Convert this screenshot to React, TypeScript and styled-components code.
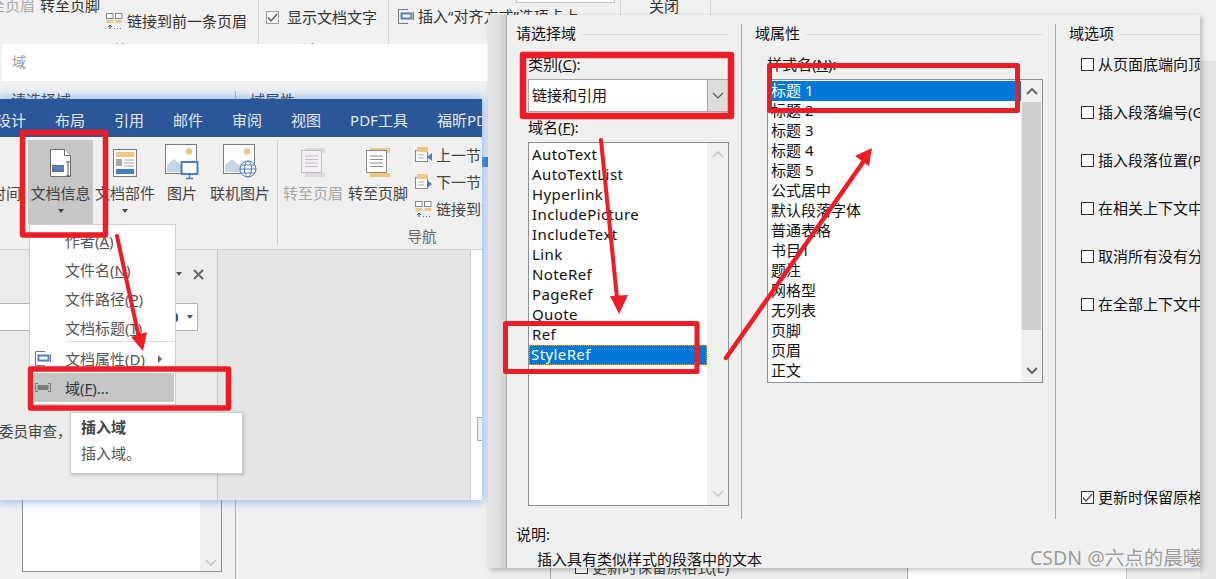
import React from "react";
import styled, { createGlobalStyle } from "styled-components";

const GlobalStyle = createGlobalStyle`
  html, body {
    margin: 0;
    padding: 0;
    background: #efefef;
  }
  * {
    box-sizing: border-box;
  }
`;

const Canvas = styled.div`
  position: relative;
  width: 1216px;
  height: 579px;
  overflow: hidden;
  background: #f0f0f0;
  color: #333;
  font-family: "Noto Sans", "Noto Sans CJK SC", sans-serif;
  font-size: 15px;
  line-height: 18px;
  white-space: nowrap;
`;

/* ---------- what lies behind everything ---------- */

const TopRibbon = styled.div`
  position: absolute;
  left: 0;
  top: 0;
  display: flex;
  width: 100%;
  height: 60px;
  overflow: hidden;
  background: #f1f1f1;
`;

const TopGroup = styled.div<{ $w: number }>`
  flex: none;
  display: flex;
  flex-direction: column;
  width: ${(p) => p.$w}px;
  height: 100%;
  border-right: 1px solid #d6d6d6;
`;

const TopRow = styled.div<{ $left: number; $top: number; $h?: number; $gap?: number }>`
  display: flex;
  align-items: center;
  gap: ${(p) => p.$gap ?? 5}px;
  margin: ${(p) => p.$top}px 0 0 ${(p) => p.$left}px;
  height: ${(p) => p.$h ?? 16}px;
`;

const Faded = styled.span`
  color: #a8a8a8;
`;

const TopLabel = styled.div<{ $left: number }>`
  margin: auto 0 0 ${(p) => p.$left}px;
  height: 19px;
  color: #666;
`;

const TopInput = styled.div`
  margin-left: 127px;
  width: 99px;
  height: 3px;
  background: #fff;
  border: 1px solid #c4c4c4;
  border-top: 0;
`;

const BackDialog = styled.div`
  position: absolute;
  left: 2px;
  top: 44px;
  display: flex;
  flex-direction: column;
  width: 490px;
  height: 535px;
  background: #f0f0f0;
`;

const BackTitle = styled.div`
  flex: none;
  height: 37px;
  padding: 9px 10px;
  background: #fff;
  color: #999;
  font-size: 14px;
`;

const BackBody = styled.div`
  display: flex;
  padding-top: 10px;
`;

const BackColumn = styled.div`
  width: 234px;
  height: 488px;
  padding-left: 9px;
  border-right: 1px solid #b4b4b4;
`;

const BackSecondColumn = styled.div`
  padding-left: 14px;
`;

const BackList = styled.div`
  display: flex;
  justify-content: flex-end;
  align-items: flex-end;
  margin: 32px 0 0 11px;
  width: 200px;
  height: 431px;
  background: #fff;
  border: 1px solid #8a8f99;
`;

const BackScroll = styled.div`
  display: flex;
  justify-content: center;
  align-items: flex-end;
  width: 21px;
  height: 100%;
  padding-bottom: 4px;
  background: #f0f0f0;
`;

const BackAccent = styled.div`
  position: absolute;
  left: 482px;
  top: 157px;
  width: 6px;
  height: 10px;
  background: #2f7fd0;
`;

const BackEdge = styled.div`
  position: absolute;
  right: 0;
  top: 61px;
  bottom: 0;
  width: 16px;
  background: #e5e5e5;
  border-top: 1px solid #dcdcdc;
`;

const BehindWindow = styled.div`
  position: absolute;
  left: 488px;
  top: 550px;
  display: flex;
  width: 712px;
  height: 29px;
  background: #eee;
`;

const BehindCell = styled.div`
  width: 63px;
  border-right: 1px solid #aaa;
`;

const BehindOption = styled.div`
  display: flex;
  align-items: center;
  gap: 4px;
  width: 356px;
  padding: 5px 0 0 24px;
  height: 29px;
  color: #444;
`;

const BehindWhite = styled.div`
  width: 220px;
  background: #fff;
  border-left: 1px solid #aaa;
  border-right: 1px solid #c8c8c8;
`;

/* ---------- word window ---------- */

const WordWindow = styled.div`
  position: absolute;
  left: 0;
  top: 99px;
  display: flex;
  flex-direction: column;
  width: 482px;
  height: 401px;
  overflow: hidden;
  background: #f0f0f0;
  box-shadow: 0 0 9px 2px rgba(100, 160, 235, 0.65);
`;

const TabBar = styled.div`
  flex: none;
  display: flex;
  gap: 29px;
  height: 38px;
  padding-top: 12px;
  overflow: hidden;
  background: #2b579a;
  color: #e3e9f3;
`;

const Tab = styled.span<{ $first?: boolean }>`
  flex: none;
  margin-left: ${(p) => (p.$first ? -4 : 0)}px;
`;

const Ribbon = styled.div`
  flex: none;
  display: flex;
  height: 113px;
  padding-top: 3px;
  overflow: hidden;
  background: #f0f0f0;
  border-bottom: 1px solid #d2d2d2;
`;

const LargeButton = styled.div<{ $w: number; $active?: boolean; $muted?: boolean }>`
  flex: none;
  display: flex;
  flex-direction: column;
  align-items: center;
  width: ${(p) => p.$w}px;
  height: 84px;
  background: ${(p) => (p.$active ? "#c6c6c6" : "transparent")};
  color: ${(p) => (p.$muted ? "#a6a6a6" : "#444")};
`;

const ClippedButton = styled(LargeButton)`
  align-items: flex-end;
  padding-right: 7px;
`;

const IconSlot = styled.div`
  display: flex;
  align-items: center;
  justify-content: center;
  height: 44px;
`;

const Caret = styled.i`
  margin-top: 7px;
  border: 3px solid transparent;
  border-top: 4px solid #444;
  border-bottom: 0;
`;

const RibbonDivider = styled.div`
  flex: none;
  width: 1px;
  height: 104px;
  margin: 1px 2px 0 4px;
  background: #cfcfcf;
`;

const NavGroup = styled.div`
  flex: none;
  display: flex;
  flex-direction: column;
  width: 284px;
`;

const NavRow = styled.div`
  display: flex;
`;

const NavSmall = styled.div`
  display: flex;
  flex-direction: column;
  margin: 1px 0 0 5px;
`;

const SmallButton = styled.div`
  display: flex;
  align-items: center;
  gap: 4px;
  height: 27px;
  color: #444;
`;

const GroupLabel = styled.div`
  margin-top: 3px;
  text-align: center;
  color: #666;
  font-size: 14.5px;
`;

const Pane = styled.div`
  flex: 1;
  display: flex;
  min-height: 0;
`;

const TaskPane = styled.div`
  flex: none;
  width: 218px;
  padding-right: 13px;
  background: #ebebeb;
  border-right: 1px solid #c8c8c8;
`;

const TaskHeader = styled.div`
  display: flex;
  justify-content: flex-end;
  align-items: center;
  gap: 11px;
  height: 48px;
`;

const PaneInput = styled.div`
  display: flex;
  justify-content: flex-end;
  align-items: center;
  gap: 9px;
  width: 198px;
  height: 28px;
  margin-top: 5px;
  padding-right: 4px;
  background: #fff;
  border: 1px solid #b4b4b4;
  border-left: 0;
`;

const PaneGlyph = styled.i`
  width: 3px;
  height: 9px;
  border-radius: 0 3px 3px 0;
  background: #2b579a;
`;

const PaneCaret = styled.i`
  border: 3px solid transparent;
  border-top: 4px solid #555;
  border-bottom: 0;
`;

const PaneText = styled.div`
  margin-top: 91px;
  margin-left: -1px;
  font-size: 14.5px;
  color: #444;
`;

const DocArea = styled.div`
  flex: 1;
  background: #e5e5e5;
`;

const DocEdge = styled.div`
  flex: none;
  width: 12px;
  padding: 167px 0 0 6px;
  background: #fff;
  border-left: 1px solid #cfcfcf;
`;

const DocMark = styled.div`
  height: 24px;
  background: #f0f0f0;
  border: 1px solid #aaa;
  border-right: 0;
`;

const Menu = styled.div`
  position: absolute;
  left: 29px;
  top: 224px;
  width: 147px;
  height: 181px;
  padding-top: 1px;
  background: #fff;
  border: 1px solid #cfcfcf;
  color: #555;
`;

const MenuItem = styled.div<{ $active?: boolean }>`
  display: grid;
  grid-template-columns: 35px 1fr auto;
  align-items: center;
  height: 29px;
  padding-right: 13px;
  background: ${(p) => (p.$active ? "#c6c6c6" : "transparent")};
  color: ${(p) => (p.$active ? "#333" : "#555")};
  box-shadow: ${(p) => (p.$active ? "inset 4px 0 0 #fff, inset -1px 0 0 #fff" : "none")};
`;

const MenuIcon = styled.span`
  display: flex;
  padding-left: 5px;
`;

const MenuSeparator = styled.div`
  height: 1px;
  margin: -1px 0 2px 37px;
  background: #ddd;
`;

const SubArrow = styled.i`
  border: 4px solid transparent;
  border-left: 4px solid #666;
  border-right: 0;
`;

const Shortcut = styled.u`
  text-underline-offset: 1px;
`;

const Tooltip = styled.div`
  position: absolute;
  left: 70px;
  top: 412px;
  width: 173px;
  height: 62px;
  padding: 1px 10px;
  background: #fff;
  border: 1px solid #ccc;
  box-shadow: 1px 1px 3px rgba(0, 0, 0, 0.2);
  line-height: 26px;
  color: #555;
`;

const TooltipTitle = styled.div`
  font-weight: 700;
  color: #444;
`;

/* ---------- the field dialog ---------- */

const FieldDialog = styled.div`
  position: absolute;
  left: 488px;
  top: 15px;
  display: flex;
  width: 712px;
  height: 553px;
  overflow: hidden;
  background: #f0f0f0;
  box-shadow: 2px 2px 5px rgba(0, 0, 0, 0.25);
  color: #111;
`;

const DialogEdge = styled.div`
  flex: none;
  width: 19px;
  background: linear-gradient(90deg, #e6e6e6 0%, #dedede 60%, #cfcfcf 100%);
  border-right: 1px solid #a8a8a8;
`;

const DialogBody = styled.div`
  flex: 1;
  min-width: 0;
  padding-top: 9px;
`;

const Columns = styled.div`
  display: grid;
  grid-template-columns: 235px 314px 1fr;
  height: 495px;
`;

const Column = styled.div<{ $pl: number; $pr: number; $divider?: boolean }>`
  display: flex;
  flex-direction: column;
  min-width: 0;
  padding: 0 ${(p) => p.$pr}px 0 ${(p) => p.$pl}px;
  border-right: ${(p) => (p.$divider ? "1px solid #a6a6a6" : "0")};
`;

const Legend = styled.div`
  display: flex;
  align-items: center;
  gap: 6px;
  height: 20px;
  padding-bottom: 2px;
  margin-bottom: 11px;

  &::after {
    content: "";
    flex: 1;
    height: 1px;
    margin-top: 2px;
    background: #dcdcdc;
  }
`;

const FieldLabel = styled.div<{ $top?: number }>`
  height: 20px;
  margin: ${(p) => p.$top ?? 0}px 0 4px 12px;
`;

const Select = styled.div`
  display: flex;
  justify-content: space-between;
  margin-left: 12px;
  height: 33px;
  background: #fff;
  border: 1px solid #a6a6a6;
`;

const SelectValue = styled.span`
  padding: 6px 3px;
`;

const SelectButton = styled.span`
  display: flex;
  align-items: center;
  justify-content: center;
  width: 21px;
  background: #dcdcdc;
  border-left: 1px solid #a6a6a6;
`;

const ListBox = styled.div<{ $h: number }>`
  display: flex;
  height: ${(p) => p.$h}px;
  margin-left: 12px;
  background: #fff;
  border: 1px solid #8a8f99;
`;

const ListItems = styled.div<{ $top: number; $inset: number; $spacing?: number }>`
  flex: 1;
  min-width: 0;
  padding: ${(p) => p.$top}px 0 0 ${(p) => p.$inset}px;
  letter-spacing: ${(p) => p.$spacing ?? 0}px;
`;

const ListItem = styled.div<{ $selected?: boolean; $focus?: boolean }>`
  height: 20px;
  padding-left: ${(p) => (p.$focus ? 2 : 3)}px;
  background: ${(p) => (p.$selected ? "#0078d7" : "transparent")};
  color: ${(p) => (p.$selected ? "#fff" : "#111")};
  outline: ${(p) => (p.$focus ? "1px dotted #e8a33c" : "0")};
  outline-offset: -1px;
`;

const ScrollTrack = styled.div`
  flex: none;
  display: flex;
  flex-direction: column;
  align-items: center;
  width: 21px;
  background: #f0f0f0;
`;

const ScrollButton = styled.div`
  flex: none;
  display: flex;
  align-items: center;
  justify-content: center;
  height: 22px;
`;

const ScrollThumb = styled.div`
  align-self: stretch;
  height: 228px;
  margin: 0 1px;
  background: #cdcdcd;
`;

const ScrollSpace = styled.div`
  flex: 1;
`;

const OptionRow = styled.div<{ $bottom?: boolean }>`
  display: flex;
  align-items: center;
  gap: 4px;
  height: 20px;
  padding-bottom: 2px;
  margin: ${(p) => (p.$bottom ? "auto 0 11px 12px" : "0 0 28px 12px")};
`;

const Box = styled.span<{ $muted?: boolean }>`
  flex: none;
  display: flex;
  align-items: center;
  justify-content: center;
  width: 13px;
  height: 13px;
  background: ${(p) => (p.$muted ? "#f4f4f4" : "#fff")};
  border: 1px solid ${(p) => (p.$muted ? "#a0a0a0" : "#333")};
`;

const DescriptionTitle = styled.div`
  height: 20px;
  margin: 6px 0 5px 9px;
`;

const Description = styled.div`
  margin-left: 30px;
`;

const Annotations = styled.svg`
  position: absolute;
  left: 0;
  top: 0;
  pointer-events: none;
`;

const Watermark = styled.div`
  position: absolute;
  left: 1030px;
  top: 546px;
  width: 170px;
  overflow: hidden;
  font-size: 19.5px;
  line-height: 24px;
  color: #9b9b9b;
  text-shadow: 0 0 1px #fff;
`;

/* ---------- drawings ---------- */

const Chevron = ({ up, color, weight = 1.2 }: { up?: boolean; color: string; weight?: number }) => (
  <svg width="12" height="8" viewBox="0 0 12 8">
    <path
      d={up ? "M1 7 6 2l5 5" : "M1 1l5 5 5-5"}
      fill="none"
      stroke={color}
      strokeWidth={weight}
    />
  </svg>
);

const DocInfoIcon = () => (
  <svg width="24" height="32" viewBox="0 0 24 32">
    <path d="M1.500 3.500h14l6 6v21h-20z" fill="#fff" stroke="#6f6f6f" />
    <path d="M15.500 3.500v6h6" fill="#fff" stroke="#6f6f6f" />
    <rect x="3.500" y="19.500" width="11" height="6" fill="#4e81bd" stroke="#6f6f6f" />
    <path d="M17 16h4M17 30h4M19 16v14" fill="none" stroke="#555" />
  </svg>
);

const DocPartsIcon = () => (
  <svg width="24" height="32" viewBox="0 0 24 32">
    <rect x="0.500" y="3.500" width="23" height="27" fill="#fff" stroke="#7b7b7b" />
    <rect x="3" y="6" width="18" height="5" fill="#f0c77e" />
    <rect x="3" y="13" width="6" height="7" fill="#a9a9a9" />
    <path d="M11 14h10M11 17h10M11 20h10" stroke="#a9a9a9" />
    <rect x="3" y="23" width="18" height="5" fill="#4a7ebb" />
  </svg>
);

const PictureFrame = () => (
  <>
    <rect x="0.500" y="0.500" width="31" height="29" fill="#fff" stroke="#7b7b7b" />
    <circle cx="24" cy="7.500" r="3.200" fill="#f0c77e" />
    <path d="M2 28V21l7-6 7 6 4-3v10z" fill="#c3d5ea" />
  </>
);

const PictureIcon = () => (
  <svg width="34" height="36" viewBox="0 0 34 36">
    <PictureFrame />
    <rect x="16.500" y="18" width="16" height="12" fill="#fff" stroke="#4a7ebb" strokeWidth="2" />
    <path d="M24.500 31v3M21 34.500h7" stroke="#4a7ebb" strokeWidth="1.500" />
  </svg>
);

const OnlinePictureIcon = () => (
  <svg width="34" height="36" viewBox="0 0 34 36">
    <PictureFrame />
    <circle cx="25" cy="25" r="8" fill="#fff" stroke="#4a7ebb" />
    <ellipse cx="25" cy="25" rx="3.500" ry="8" fill="none" stroke="#4a7ebb" />
    <path d="M17 25h16M18.500 21h13M18.500 29h13" stroke="#4a7ebb" />
  </svg>
);

const HeaderIcon = ({ muted }: { muted?: boolean }) => {
  const line = muted ? "#c2bcc4" : "#8a8a8a";
  const accent = muted ? "#dcdadc" : "#f0c77e";
  return (
    <svg width="26" height="32" viewBox="0 0 26 32">
      <rect x="5" y="2" width="20" height="5" fill={accent} />
      <rect x="1.500" y="4.500" width="20" height="22" fill={muted ? "#f5f0f6" : "#fff"} stroke={line} />
      <path d="M5 10h13M5 13.500h13M5 17h13M5 20.500h13" stroke={line} />
      <rect x="5" y="27" width="20" height="4" fill={accent} />
    </svg>
  );
};

const SectionIcon = ({ next }: { next?: boolean }) => (
  <svg width="17" height="18" viewBox="0 0 17 18">
    <rect x="0.500" y="4.500" width="12" height="11" fill="#fff" stroke="#8a8a8a" />
    <rect x="2" y="1" width="11" height="5" fill="#f0c77e" />
    <path d="M3 9h6M3 12h6" stroke="#a9a9a9" />
    <path d={next ? "M12 7l5 4-5 4z" : "M17 7l-5 4 5 4z"} fill="#4a7ebb" />
  </svg>
);

const LinkIcon = () => (
  <svg width="17" height="18" viewBox="0 0 17 18">
    <rect x="0.500" y="1.500" width="6.500" height="5" fill="#fff" stroke="#8a8a8a" />
    <rect x="9.500" y="1.500" width="6.500" height="5" fill="#fff" stroke="#8a8a8a" />
    <rect x="0.500" y="8" width="6.500" height="3" fill="#f0c77e" />
    <rect x="9.500" y="8" width="6.500" height="3" fill="#f0c77e" />
    <path d="M4 17v-4M2 15l2-2 2 2" fill="none" stroke="#2b579a" />
    <path d="M8 16.500h9" stroke="#4a7ebb" strokeDasharray="1 2" />
  </svg>
);

const PagePropertyIcon = () => (
  <svg width="16" height="15" viewBox="0 0 16 15">
    <path d="M10 .5H.5v14H10" fill="none" stroke="#777" />
    <rect x="3.500" y="4.500" width="10" height="5" fill="#fff" stroke="#4e81bd" strokeWidth="2" />
    <path d="M15.500 3v8" stroke="#777" />
  </svg>
);

const FieldIcon = () => (
  <svg width="16" height="9" viewBox="0 0 16 9">
    <path d="M3 .5H.5v8H3M13 .5h2.500v8H13" fill="none" stroke="#777" />
    <rect x="2.500" y="2" width="11" height="5" fill="#7b7b7b" />
  </svg>
);

const CloseIcon = () => (
  <svg width="11" height="11" viewBox="0 0 11 11">
    <path d="M1 1l9 9M10 1l-9 9" stroke="#666" strokeWidth="2" />
  </svg>
);

const SmallCheck = () => (
  <svg width="11" height="9" viewBox="0 0 11 9">
    <path d="M1 4.500 4 8l6-7" fill="none" stroke="#555" strokeWidth="1.300" />
  </svg>
);

const RED = "#ee1c25";

const AnnotationLayer = () => (
  <Annotations width="1216" height="579" viewBox="0 0 1216 579">
    <g fill="none" stroke={RED} strokeLinejoin="round">
      <rect x="22.500" y="132.500" width="83" height="102.500" strokeWidth="5.500" />
      <rect x="30.500" y="369" width="198" height="39" strokeWidth="5.500" />
      <rect x="523" y="55" width="208" height="61" strokeWidth="6.500" />
      <rect x="505.500" y="323.500" width="191.500" height="48" strokeWidth="5" />
      <rect x="769.500" y="65.500" width="248" height="45" strokeWidth="5" />
    </g>
    <g fill="none" stroke={RED} strokeWidth="4" strokeLinecap="round">
      <path d="M117 236 139 338" />
      <path d="M601 140 617 298" />
      <path d="M726 358 866 158" strokeWidth="4.500" />
    </g>
    <g fill={RED}>
      <path d="M143 351 131 337 147 332z" />
      <path d="M619 314 610 296 628 295z" />
      <path d="M872 148 855 156 869 166z" />
    </g>
  </Annotations>
);

const nameItems = [
  "AutoText",
  "AutoTextList",
  "Hyperlink",
  "IncludePicture",
  "IncludeText",
  "Link",
  "NoteRef",
  "PageRef",
  "Quote",
  "Ref",
];

const styleItems = [
  "标题 2",
  "标题 3",
  "标题 4",
  "标题 5",
  "公式居中",
  "默认段落字体",
  "普通表格",
  "书目1",
  "题注",
  "网格型",
  "无列表",
  "页脚",
  "页眉",
  "正文",
];

const options = [
  "从页面底端向顶部搜索(B)",
  "插入段落编号(G)",
  "插入段落位置(P)",
  "在相关上下文中插入段落编号(R)",
  "取消所有没有分隔符的数字(D)",
  "在全部上下文中插入段落编号(F)",
];

const tabs = ["布局", "引用", "邮件", "审阅", "视图", "PDF工具", "福昕PDF编辑器"];

const App = () => {
  return (
    <Canvas>
      <GlobalStyle />

      <TopRibbon>
        <TopGroup $w={259}>
          <TopRow $left={-25} $top={-3}>
            <Faded>转至页眉</Faded>
            <span>转至页脚</span>
          </TopRow>
          <TopRow $left={106} $top={0} $gap={4}>
            <LinkIcon />
            <span>链接到前一条页眉</span>
          </TopRow>
          <TopLabel $left={98}>导航</TopLabel>
        </TopGroup>
        <TopGroup $w={130}>
          <TopRow $left={7} $top={8} $h={18} $gap={8}>
            <Box $muted>
              <SmallCheck />
            </Box>
            <span>显示文档文字</span>
          </TopRow>
          <TopLabel $left={44}>选项</TopLabel>
        </TopGroup>
        <TopGroup $w={232}>
          <TopInput />
          <TopRow $left={9} $top={4} $h={18} $gap={4}>
            <PagePropertyIcon />
            <span>插入“对齐方式”选项卡上</span>
          </TopRow>
        </TopGroup>
        <TopGroup $w={90}>
          <TopRow $left={28} $top={-2}>
            <span>关闭</span>
          </TopRow>
        </TopGroup>
      </TopRibbon>

      <BackDialog>
        <BackTitle>域</BackTitle>
        <BackBody>
          <BackColumn>
            请选择域
            <BackList>
              <BackScroll>
                <Chevron color="#c8c8c8" weight={1.6} />
              </BackScroll>
            </BackList>
          </BackColumn>
          <BackSecondColumn>域属性</BackSecondColumn>
        </BackBody>
      </BackDialog>
      <BackAccent />
      <BackEdge />

      <BehindWindow>
        <BehindCell />
        <BehindOption>
          <Box />
          更新时保留原格式(E)
        </BehindOption>
        <BehindWhite />
      </BehindWindow>

      <WordWindow>
        <TabBar>
          <Tab $first>设计</Tab>
          {tabs.map((tab) => (
            <Tab key={tab}>{tab}</Tab>
          ))}
        </TabBar>
        <Ribbon>
          <ClippedButton $w={28}>
            <IconSlot />
            <span>时间</span>
          </ClippedButton>
          <LargeButton $w={65} $active>
            <IconSlot>
              <DocInfoIcon />
            </IconSlot>
            <span>文档信息</span>
            <Caret />
          </LargeButton>
          <LargeButton $w={64}>
            <IconSlot>
              <DocPartsIcon />
            </IconSlot>
            <span>文档部件</span>
            <Caret />
          </LargeButton>
          <LargeButton $w={50}>
            <IconSlot>
              <PictureIcon />
            </IconSlot>
            <span>图片</span>
          </LargeButton>
          <LargeButton $w={66}>
            <IconSlot>
              <OnlinePictureIcon />
            </IconSlot>
            <span>联机图片</span>
          </LargeButton>
          <RibbonDivider />
          <NavGroup>
            <NavRow>
              <LargeButton $w={66} $muted>
                <IconSlot>
                  <HeaderIcon muted />
                </IconSlot>
                <span>转至页眉</span>
              </LargeButton>
              <LargeButton $w={64}>
                <IconSlot>
                  <HeaderIcon />
                </IconSlot>
                <span>转至页脚</span>
              </LargeButton>
              <NavSmall>
                <SmallButton>
                  <SectionIcon />
                  上一节
                </SmallButton>
                <SmallButton>
                  <SectionIcon next />
                  下一节
                </SmallButton>
                <SmallButton>
                  <LinkIcon />
                  链接到前一条页眉
                </SmallButton>
              </NavSmall>
            </NavRow>
            <GroupLabel>导航</GroupLabel>
          </NavGroup>
        </Ribbon>
        <Pane>
          <TaskPane>
            <TaskHeader>
              <PaneCaret />
              <CloseIcon />
            </TaskHeader>
            <PaneInput>
              <PaneGlyph />
              <PaneCaret />
            </PaneInput>
            <PaneText>委员审查，在</PaneText>
          </TaskPane>
          <DocArea />
          <DocEdge>
            <DocMark />
          </DocEdge>
        </Pane>
      </WordWindow>

      <Menu>
        <MenuItem>
          <span />
          <span>
            作者(<Shortcut>A</Shortcut>)
          </span>
        </MenuItem>
        <MenuItem>
          <span />
          <span>
            文件名(<Shortcut>N</Shortcut>)
          </span>
        </MenuItem>
        <MenuItem>
          <span />
          <span>
            文件路径(<Shortcut>P</Shortcut>)
          </span>
        </MenuItem>
        <MenuItem>
          <span />
          <span>
            文档标题(<Shortcut>T</Shortcut>)
          </span>
        </MenuItem>
        <MenuSeparator />
        <MenuItem>
          <MenuIcon>
            <PagePropertyIcon />
          </MenuIcon>
          <span>
            文档属性(<Shortcut>D</Shortcut>)
          </span>
          <SubArrow />
        </MenuItem>
        <MenuItem $active>
          <MenuIcon>
            <FieldIcon />
          </MenuIcon>
          <span>
            域(<Shortcut>F</Shortcut>)...
          </span>
        </MenuItem>
      </Menu>

      <Tooltip>
        <TooltipTitle>插入域</TooltipTitle>
        插入域。
      </Tooltip>

      <FieldDialog>
        <DialogEdge />
        <DialogBody>
          <Columns>
            <Column $pl={9} $pr={12} $divider>
              <Legend>请选择域</Legend>
              <FieldLabel>
                类别(<Shortcut>C</Shortcut>):
              </FieldLabel>
              <Select>
                <SelectValue>链接和引用</SelectValue>
                <SelectButton>
                  <Chevron color="#555" />
                </SelectButton>
              </Select>
              <FieldLabel $top={6}>
                域名(<Shortcut>F</Shortcut>):
              </FieldLabel>
              <ListBox $h={364}>
                <ListItems $top={2} $inset={0} $spacing={0.4}>
                  {nameItems.map((item) => (
                    <ListItem key={item}>{item}</ListItem>
                  ))}
                  <ListItem $selected $focus>
                    StyleRef
                  </ListItem>
                </ListItems>
                <ScrollTrack>
                  <ScrollButton>
                    <Chevron up color="#c8c8c8" weight={1.6} />
                  </ScrollButton>
                  <ScrollSpace />
                  <ScrollButton>
                    <Chevron color="#c8c8c8" weight={1.6} />
                  </ScrollButton>
                </ScrollTrack>
              </ListBox>
            </Column>
            <Column $pl={13} $pr={12} $divider>
              <Legend>域属性</Legend>
              <FieldLabel>
                样式名(<Shortcut>N</Shortcut>):
              </FieldLabel>
              <ListBox $h={304}>
                <ListItems $top={1} $inset={0}>
                  <ListItem $selected>标题 1</ListItem>
                  {styleItems.map((item) => (
                    <ListItem key={item}>{item}</ListItem>
                  ))}
                </ListItems>
                <ScrollTrack>
                  <ScrollButton>
                    <Chevron up color="#606060" weight={1.8} />
                  </ScrollButton>
                  <ScrollThumb />
                  <ScrollSpace />
                  <ScrollButton>
                    <Chevron color="#606060" weight={1.8} />
                  </ScrollButton>
                </ScrollTrack>
              </ListBox>
            </Column>
            <Column $pl={13} $pr={0}>
              <Legend>域选项</Legend>
              {options.map((option) => (
                <OptionRow key={option}>
                  <Box />
                  {option}
                </OptionRow>
              ))}
              <OptionRow $bottom>
                <Box>
                  <SmallCheck />
                </Box>
                更新时保留原格式(V)
              </OptionRow>
            </Column>
          </Columns>
          <DescriptionTitle>说明:</DescriptionTitle>
          <Description>插入具有类似样式的段落中的文本</Description>
        </DialogBody>
      </FieldDialog>

      <AnnotationLayer />
      <Watermark>CSDN @六点的晨曦</Watermark>
    </Canvas>
  );
};

export default App;
